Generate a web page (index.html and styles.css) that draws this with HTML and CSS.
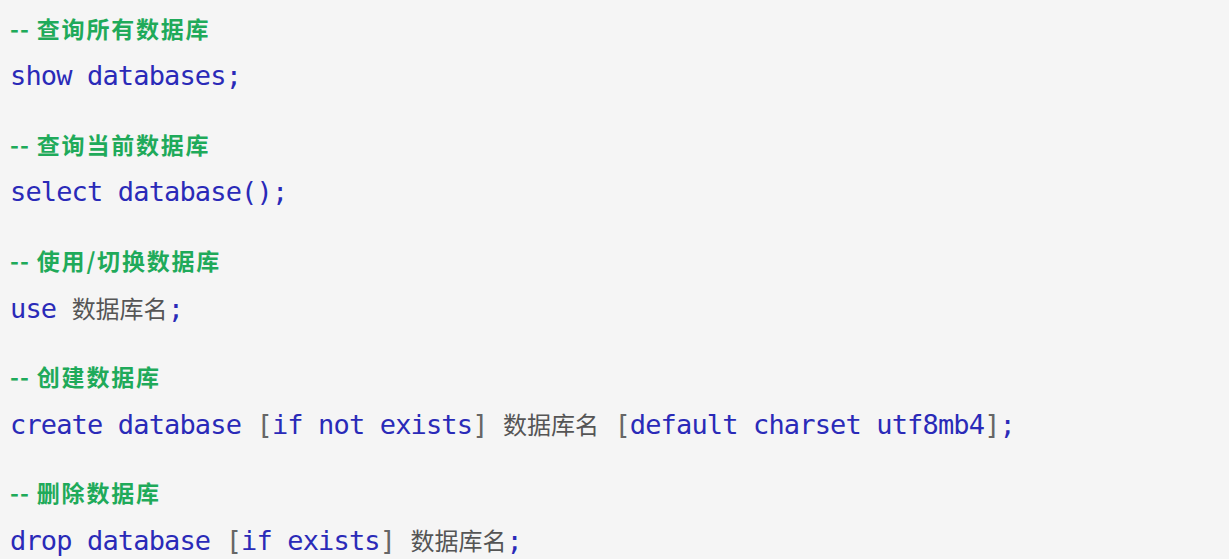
FILE: index.html
```html
<!DOCTYPE html>
<html lang="zh">
<head>
<meta charset="utf-8">
<link rel="stylesheet" href="styles.css">
</head>
<body>
<main class="doc">
  <section class="block">
    <div class="comment"><span class="dash">--</span> 查询所有数据库</div>
    <div class="code"><span class="kw">show databases;</span></div>
  </section>
  <section class="block">
    <div class="comment"><span class="dash">--</span> 查询当前数据库</div>
    <div class="code"><span class="kw">select database();</span></div>
  </section>
  <section class="block">
    <div class="comment"><span class="dash">--</span> 使用/切换数据库</div>
    <div class="code"><span class="kw">use</span> <span class="name">数据库名</span><span class="kw">;</span></div>
  </section>
  <section class="block">
    <div class="comment"><span class="dash">--</span> 创建数据库</div>
    <div class="code"><span class="kw">create database</span> <span class="br">[</span><span class="kw">if not exists</span><span class="br">]</span> <span class="name">数据库名</span> <span class="br">[</span><span class="kw">default charset utf8mb4</span><span class="br">]</span><span class="kw">;</span></div>
  </section>
  <section class="block">
    <div class="comment"><span class="dash">--</span> 删除数据库</div>
    <div class="code"><span class="kw">drop database</span> <span class="br">[</span><span class="kw">if exists</span><span class="br">]</span> <span class="name">数据库名</span><span class="kw">;</span></div>
  </section>
</main>
</body>
</html>
```

FILE: styles.css
```css
html, body {
  margin: 0;
  padding: 0;
  background: #f5f5f5;
  height: 100%;
}
.doc {
  display: flex;
  flex-direction: column;
  gap: 33px;
  padding: 13px 0 0 10px;
}
.block {
  display: flex;
  flex-direction: column;
  gap: 13px;
}
.comment {
  height: 30px;
  line-height: 30px;
  font-family: "Noto Sans CJK SC", "Noto Sans", sans-serif;
  font-weight: 700;
  font-size: 23px;
  letter-spacing: 1.8px;
  color: #1faa5a;
  white-space: nowrap;
}
.dash {
  letter-spacing: 1px;
  font-size: 24px;
}
.code {
  height: 40px;
  line-height: 40px;
  font-family: "DejaVu Sans Mono", "Noto Sans CJK SC", monospace;
  font-size: 27px;
  letter-spacing: -0.85px;
  white-space: pre;
  color: #2a2ab8;
}
.kw { color: #2a2ab8; }
.br { color: #666666; }
.name {
  font-family: "Noto Sans CJK SC", sans-serif;
  font-size: 24px;
  color: #555555;
  letter-spacing: 0;
}
```
